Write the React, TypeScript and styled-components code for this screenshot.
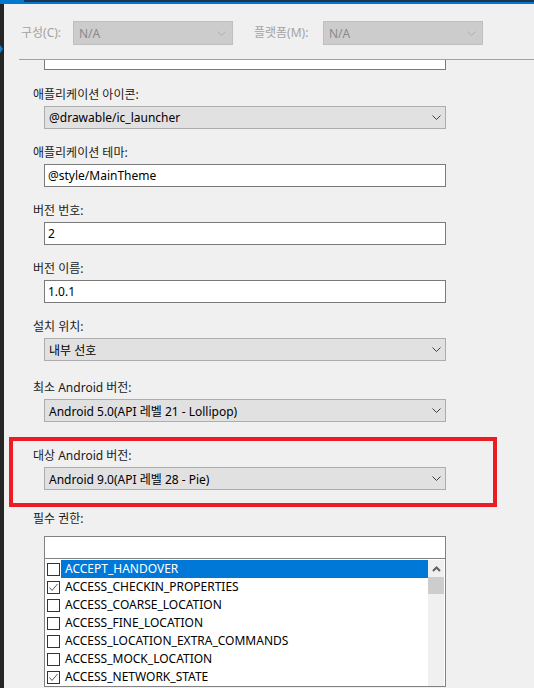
import styled, { createGlobalStyle } from "styled-components";

const GlobalStyle = createGlobalStyle`
  html, body {
    margin: 0;
    padding: 0;
    background: #f0f0f0;
  }
  body {
    font-family: "Noto Sans", "Noto Sans CJK KR", sans-serif;
    font-size: 12px;
    color: #000;
  }
`;

const Frame = styled.div`
  width: 534px;
  height: 688px;
  overflow: hidden;
  display: flex;
  flex-direction: column;
  background: #f0f0f0;
`;

const TopStripe = styled.div`
  flex-shrink: 0;
  height: 2px;
  background: linear-gradient(to right, #0079cc 24px, #1b3452 24px);
  border-bottom: 2px solid #0079cc;
`;

const Body = styled.div`
  flex: 1;
  display: flex;
  min-height: 0;
`;

const Rail = styled.div`
  width: 4px;
  flex-shrink: 0;
  background: #252526;
`;

const RailMarker = styled.div`
  margin-top: 41px;
  width: 0;
  height: 0;
  border-top: 4px solid transparent;
  border-bottom: 4px solid transparent;
  border-left: 3px solid #0e7fd6;
`;

const Main = styled.div`
  flex: 1;
  min-width: 0;
  display: flex;
  flex-direction: column;
`;

const Toolbar = styled.div`
  flex-shrink: 0;
  height: 55px;
  box-sizing: border-box;
  padding: 17px 0 14px 17px;
  display: flex;
  align-items: flex-start;
`;

const ToolLabel = styled.span<{ $width: number }>`
  width: ${(p) => p.$width}px;
  height: 24px;
  line-height: 24px;
  color: #a3a3a3;
  flex-shrink: 0;
`;

const DisabledCombo = styled.div`
  width: 160px;
  height: 24px;
  box-sizing: border-box;
  margin-right: 21px;
  padding: 0 6px 0 5px;
  display: flex;
  align-items: center;
  justify-content: space-between;
  background: #cccccc;
  border: 1px solid #bfbfbf;
  color: #8a8a8a;
  flex-shrink: 0;
`;

const Separator = styled.div`
  flex-shrink: 0;
  height: 1px;
  margin-left: 15px;
  background: #a0a0a0;
`;

const ScrollArea = styled.div`
  flex: 1;
  min-height: 0;
  overflow: hidden;
`;

/* scrolled a little: the box above the icon field is cut by the top edge */
const Content = styled.div`
  margin-top: -13px;
  padding-left: 29px;
  display: flex;
  flex-direction: column;
  align-items: flex-start;
`;

const Field = styled.div<{ $extra?: number }>`
  display: flex;
  flex-direction: column;
  align-items: flex-start;
  margin-top: ${(p) => p.$extra ?? 0}px;
  margin-bottom: 14px;
`;

const Label = styled.div<{ $below?: number }>`
  height: 16px;
  line-height: 16px;
  margin-top: 2px;
  margin-bottom: ${(p) => p.$below ?? 3}px;
  color: #1a1a1a;
`;

const TextBox = styled.div<{ $cut?: boolean }>`
  width: 402px;
  height: 23px;
  box-sizing: border-box;
  margin-left: 11px;
  margin-bottom: ${(p) => (p.$cut ? 15 : 0)}px;
  padding-left: 3px;
  display: flex;
  align-items: center;
  background: #fff;
  border: 1px solid #7a7a7a;
`;

const Combo = styled.div`
  width: 402px;
  height: 23px;
  box-sizing: border-box;
  margin-left: 11px;
  padding: 0 4px 0 4px;
  display: flex;
  align-items: center;
  justify-content: space-between;
  background: #e1e1e1;
  border: 1px solid #adadad;
`;

const Highlight = styled.div`
  margin: 1px 0 0 -24px;
  width: 488px;
  box-sizing: border-box;
  border: 4px solid #ed1c24;
  padding: 5px 0 13px 20px;
  display: flex;
  flex-direction: column;
  align-items: flex-start;
`;

const PermList = styled.div`
  margin-left: 11px;
  width: 402px;
  box-sizing: border-box;
  background: #fff;
  border: 1px solid #828282;
`;

const Filter = styled.div`
  height: 21px;
  border-bottom: 1px solid #828282;
`;

const ListBody = styled.div`
  display: flex;
  padding-top: 1px;
`;

const Items = styled.div`
  flex: 1;
  min-width: 0;
`;

const Row = styled.div`
  height: 18px;
  display: flex;
  align-items: center;
`;

const Check = styled.div`
  width: 13px;
  height: 13px;
  box-sizing: border-box;
  margin: 0 1px 0 2px;
  border: 1px solid #333;
  background: #fff;
  display: flex;
  align-items: center;
  justify-content: center;
  flex-shrink: 0;
`;

const RowText = styled.div<{ $selected?: boolean }>`
  flex: 1;
  height: 18px;
  line-height: 18px;
  padding-left: 4px;
  background: ${(p) => (p.$selected ? "#0078d7" : "transparent")};
  color: ${(p) => (p.$selected ? "#fff" : "#000")};
  white-space: nowrap;
`;

const ScrollBar = styled.div`
  width: 16px;
  margin-right: 1px;
  flex-shrink: 0;
  background: #f0f0f0;
  display: flex;
  flex-direction: column;
`;

const ScrollArrow = styled.div`
  height: 17px;
  display: flex;
  align-items: center;
  justify-content: center;
`;

const Thumb = styled.div`
  height: 17px;
  background: #cdcdcd;
`;

function Chevron({ color = "#3c3c3c" }: { color?: string }) {
  return (
    <svg width="9" height="5" viewBox="0 0 9 5">
      <polyline points="0.5,0.5 4.5,4.5 8.5,0.5" fill="none" stroke={color} strokeWidth="1" />
    </svg>
  );
}

const permissions = [
  { name: "ACCEPT_HANDOVER", checked: false, selected: true },
  { name: "ACCESS_CHECKIN_PROPERTIES", checked: true },
  { name: "ACCESS_COARSE_LOCATION", checked: false },
  { name: "ACCESS_FINE_LOCATION", checked: false },
  { name: "ACCESS_LOCATION_EXTRA_COMMANDS", checked: false },
  { name: "ACCESS_MOCK_LOCATION", checked: false },
  { name: "ACCESS_NETWORK_STATE", checked: true },
];

export default function App() {
  return (
    <Frame>
      <GlobalStyle />
      <TopStripe />
      <Body>
        <Rail>
          <RailMarker />
        </Rail>
        <Main>
          <Toolbar>
            <ToolLabel $width={52}>구성(C):</ToolLabel>
            <DisabledCombo>
              <span>N/A</span>
              <Chevron color="#b0b0b0" />
            </DisabledCombo>
            <ToolLabel $width={69}>플랫폼(M):</ToolLabel>
            <DisabledCombo>
              <span>N/A</span>
              <Chevron color="#b0b0b0" />
            </DisabledCombo>
          </Toolbar>
          <Separator />
          <ScrollArea>
            <Content>
              <TextBox $cut />

              <Field>
                <Label>애플리케이션 아이콘:</Label>
                <Combo>
                  <span>@drawable/ic_launcher</span>
                  <Chevron />
                </Combo>
              </Field>

              <Field>
                <Label>애플리케이션 테마:</Label>
                <TextBox>@style/MainTheme</TextBox>
              </Field>

              <Field>
                <Label>버전 번호:</Label>
                <TextBox>2</TextBox>
              </Field>

              <Field>
                <Label>버전 이름:</Label>
                <TextBox>1.0.1</TextBox>
              </Field>

              <Field>
                <Label>설치 위치:</Label>
                <Combo>
                  <span>내부 선호</span>
                  <Chevron />
                </Combo>
              </Field>

              <Field $extra={3}>
                <Label>최소 Android 버전:</Label>
                <Combo>
                  <span>Android 5.0(API 레벨 21 - Lollipop)</span>
                  <Chevron />
                </Combo>
              </Field>

              <Highlight>
                <Label>대상 Android 버전:</Label>
                <Combo>
                  <span>Android 9.0(API 레벨 28 - Pie)</span>
                  <Chevron />
                </Combo>
              </Highlight>

              <Field $extra={2}>
                <Label $below={9}>필수 권한:</Label>
                <PermList>
                  <Filter />
                  <ListBody>
                    <Items>
                      {permissions.map((perm) => (
                        <Row key={perm.name}>
                          <Check>
                            {perm.checked && (
                              <svg width="11" height="11" viewBox="0 0 11 11">
                                <polyline
                                  points="1.5,5.5 4,8.5 9.5,2"
                                  fill="none"
                                  stroke="#5a5a5a"
                                  strokeWidth="1"
                                />
                              </svg>
                            )}
                          </Check>
                          <RowText $selected={perm.selected}>{perm.name}</RowText>
                        </Row>
                      ))}
                    </Items>
                    <ScrollBar>
                      <ScrollArrow>
                        <svg width="9" height="6" viewBox="0 0 9 6">
                          <polyline
                            points="1,5 4.5,1.5 8,5"
                            fill="none"
                            stroke="#606060"
                            strokeWidth="2"
                          />
                        </svg>
                      </ScrollArrow>
                      <Thumb />
                    </ScrollBar>
                  </ListBody>
                </PermList>
              </Field>
            </Content>
          </ScrollArea>
        </Main>
      </Body>
    </Frame>
  );
}
